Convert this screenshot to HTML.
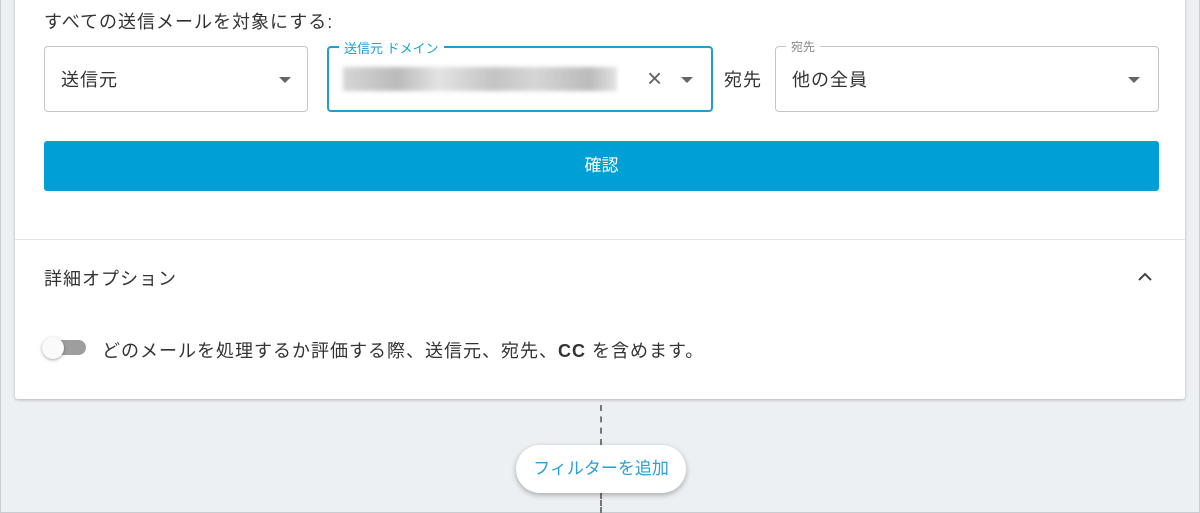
<!DOCTYPE html>
<html><head><meta charset="utf-8"><style>
*{box-sizing:border-box;margin:0;padding:0}
body{width:1200px;height:513px;overflow:hidden;background:#edf0f3;font-family:"Liberation Sans","Noto Sans CJK JP",sans-serif;color:#333;position:relative}
.frame{position:absolute;left:0;top:0;width:1200px;height:513px;border:1px solid #c9cdd1;border-top:none}
.card{position:absolute;left:15px;top:-5px;width:1170px;height:404px;background:#fff;border-radius:3px;box-shadow:0 1px 3px rgba(0,0,0,.25)}
.t{position:absolute;font-size:18px;letter-spacing:1px;color:#333;white-space:nowrap}
.box{position:absolute;border:1px solid #c4c4c4;border-radius:4px;height:66px;top:46px}
.arrow{position:absolute;width:0;height:0;border-left:6px solid transparent;border-right:6px solid transparent;border-top:6px solid #666;top:30px}
.lbl{position:absolute;top:-9px;left:10px;background:#fff;padding:0 5px;font-size:12px;color:#888}
.btn{position:absolute;left:44px;top:141px;width:1115px;height:50px;background:#009fd6;border-radius:3px;color:#fff;font-size:17px;text-align:center;line-height:50px}
.hr{position:absolute;left:15px;top:239px;width:1170px;height:1px;background:#e3e3e3}
.dash{position:absolute;left:600px;width:0;border-left:2px dashed #777}
.add{position:absolute;left:516px;top:445px;width:170px;height:48px;background:#fff;border-radius:24px;box-shadow:0 2px 6px rgba(0,0,0,.3);color:#2a9fd6;font-size:17px;text-align:center;line-height:48px}
</style></head><body>
<div class="frame"></div>
<div class="card"></div>
<div class="t" style="left:44px;top:8px">すべての送信メールを対象にする:</div>
<div class="box" style="left:44px;width:264px"><span class="t" style="left:16px;top:19px">送信元</span><div class="arrow" style="left:234px"></div></div>
<div class="box" style="left:327px;width:386px;border:2px solid #1a9fd6"><div class="lbl" style="color:#1a9fd6;top:-10px;font-size:13px">送信元 ドメイン</div>
<div style="position:absolute;left:14px;top:19px;width:274px;height:24px;background:linear-gradient(90deg,#ccc,#aaa 20%,#ddd 35%,#b5b5b5 55%,#ccc 70%,#aaa 90%,#ddd);filter:blur(2px);opacity:.8"></div>
<span style="position:absolute;left:318px;top:15px;font-size:26px;color:#666">×</span><div class="arrow" style="left:352px;top:29px"></div></div>
<div class="t" style="left:724px;top:66px">宛先</div>
<div class="box" style="left:775px;width:384px"><div class="lbl">宛先</div><span class="t" style="left:16px;top:19px">他の全員</span><div class="arrow" style="left:352px"></div></div>
<div class="btn">確認</div>
<div class="hr"></div>
<div class="t" style="left:44px;top:265px">詳細オプション</div>
<svg style="position:absolute;left:1138px;top:272px" width="14" height="10"><path d="M1 8 L7 2 L13 8" stroke="#444" stroke-width="2" fill="none"/></svg>
<div style="position:absolute;left:50px;top:340px;width:36px;height:15px;background:#9e9e9e;border-radius:8px"></div>
<div style="position:absolute;left:42px;top:337px;width:22px;height:22px;background:#fafafa;border-radius:50%;box-shadow:0 1px 3px rgba(0,0,0,.35)"></div>
<div class="t" style="left:102px;top:337px">どのメールを処理するか評価する際、送信元、宛先、<b>CC</b> を含めます。</div>
<div class="dash" style="top:405px;height:40px"></div>
<div class="dash" style="top:493px;height:20px"></div>
<div class="add">フィルターを追加</div>
</body></html>
